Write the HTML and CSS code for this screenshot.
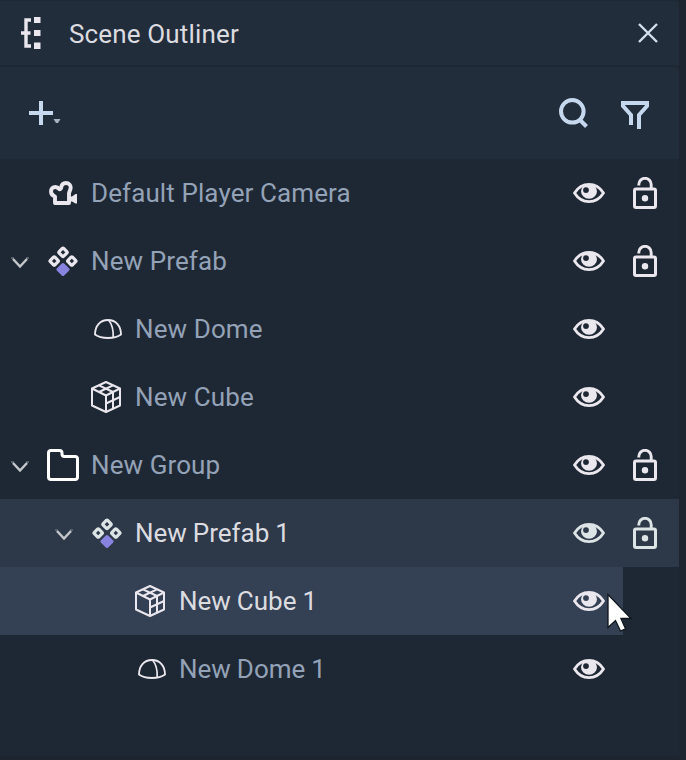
FILE: index.html
```
<!DOCTYPE html>
<html lang="en">
<head>
<meta charset="utf-8">
<title>Scene Outliner</title>
<link rel="stylesheet" href="styles.css">
</head>
<body>
<svg class="sprites" aria-hidden="true">
  <symbol id="chevron" viewBox="0 0 18 12"><path d="M0 1h3M15 1h3" stroke="#56606c" stroke-width="2"/><path d="M2 2l7 7.500 7-7.500" fill="none" stroke="#c4c7ca" stroke-width="2.500"/></symbol>
  <symbol id="eye" viewBox="0 0 32 20"><path d="M1.500 10C5 4.500 10 1.400 16 1.400S27 4.500 30.500 10C27 15.500 22 18.600 16 18.600S5 15.500 1.500 10z" fill="none" stroke="currentColor" stroke-width="2.800" stroke-linejoin="round"/><path fill-rule="evenodd" d="M16 1a8 7.200 0 0 1 8 7.200a8 7.600 0 0 1-16 0a8 7.200 0 0 1 8-7.200zM13 4.200a2.900 2.900 0 1 0 0 5.800a2.900 2.900 0 1 0 0-5.800z" fill="currentColor"/></symbol>
  <symbol id="lock" viewBox="0 0 24 32"><rect x="1.500" y="12" width="21" height="18.500" rx="1.500" fill="none" stroke="currentColor" stroke-width="3"/><path d="M5.800 8.500V7.500a6 6 0 0 1 12.400 0V12" fill="none" stroke="currentColor" stroke-width="2.900"/><circle cx="12" cy="21.300" r="3.200" fill="currentColor"/></symbol>
  <symbol id="prefab" viewBox="0 0 30 30"><g fill="none" stroke="currentColor" stroke-width="3.200"><rect x="-3.200" y="-3.200" width="6.400" height="6.400" rx="1" transform="translate(15 6.300) rotate(45)"/><rect x="-3.200" y="-3.200" width="6.400" height="6.400" rx="1" transform="translate(6.200 15) rotate(45)"/><rect x="-3.200" y="-3.200" width="6.400" height="6.400" rx="1" transform="translate(23.800 15) rotate(45)"/></g><rect x="-5.100" y="-5.100" width="10.200" height="10.200" rx="1.700" transform="translate(15 23.500) rotate(45)" fill="#8983e0"/></symbol>
  <symbol id="camera" viewBox="0 0 28 24"><path d="M6 22V15.500C3.200 14.500 2 12.500 2 10.200C2 7.700 3.800 6 6.300 6C8.300 6 9.500 7 10.500 8.300C11.500 8.300 12 7.600 12.200 6.500C12.600 3.700 14.300 2 17 2S21.700 4 21.700 6.500C21.700 9 20 10.500 20 12.500V22z" fill="none" stroke="currentColor" stroke-width="3.900" stroke-linejoin="round"/><path d="M20 15.500h3l3.500-2.500H28v9.500h-1.500l-3.500-2h-3z" fill="currentColor"/></symbol>
  <symbol id="dome" viewBox="0 0 28 20"><path d="M1 15.500C1 7 6 1 14 1s13 6 13 14.500C24 17.800 19.500 19 14 19S4 17.800 1 15.500z" fill="none" stroke="currentColor" stroke-width="1.900" stroke-linejoin="round"/><path d="M14.500 1c3.500 4 5 10 4.700 17.500" fill="none" stroke="currentColor" stroke-width="1.700"/></symbol>
  <symbol id="cube" viewBox="0 0 30 32"><g fill="none" stroke="currentColor" stroke-width="2" stroke-linejoin="round"><path d="M15 1l14 6.500v17L15 31 1 24.500v-17zM1 7.500L15 14.500l14-7M15 14.500V31"/><path d="M8 4.300l14 6.700v16.500M22 4.300L8 11M15 22.500L29 16"/></g></symbol>
  <symbol id="folder" viewBox="0 0 32 32"><path d="M4 1.500h8.500q2.500 0 2.500 2.500v1q0 2.500 2.500 2.500H28q2.500 0 2.500 2.500v18q0 2.500-2.500 2.500H4q-2.500 0-2.500-2.500V4q0-2.500 2.500-2.500z" fill="none" stroke="#fff" stroke-width="3"/></symbol>
</svg>

<main class="panel">
  <header class="titlebar">
    <svg class="tree-icon" viewBox="0 0 20 32"><path d="M10 3H5v26h5M0 16h9.500" fill="none" stroke="#ebe7ee" stroke-width="3.400"/><path d="M13 0h6.500v6h-6.500zM13 13h6.500v6h-6.500zM13 25.500h6.500v6.500h-6.500z" fill="#ebe7ee"/></svg>
    <h1 class="title">Scene Outliner</h1>
    <svg class="close-icon" viewBox="0 0 20 20"><path d="M1 1l18 18M19 1L1 19" stroke="#d3dfec" stroke-width="2.400"/></svg>
  </header>
  <div class="toolbar">
    <svg class="add-icon" viewBox="0 0 32 24"><path d="M12 0v24M0 12h24" stroke="#c5d8ee" stroke-width="4"/><path d="M24.500 18h7l-2.500 4h-2z" fill="#a5b3c2"/></svg>
    <svg class="search-icon" viewBox="0 0 30 30"><circle cx="13.300" cy="13.300" r="11.300" fill="none" stroke="#c5d8ee" stroke-width="4"/><path d="M20.500 21.500l7 7" fill="none" stroke="#c5d8ee" stroke-width="4"/></svg>
    <svg class="filter-icon" viewBox="0 0 28 28"><path d="M10 24V14L2 5V2h24v3l-8 9v14" fill="none" stroke="#c5d8ee" stroke-width="4"/></svg>
  </div>
  <div class="tree">
    <div class="row">
      <span class="twist"></span><span class="kind"><svg class="camera"><use href="#camera"/></svg></span><span class="name">Default Player Camera</span>
      <span class="see"><svg class="eye"><use href="#eye"/></svg></span><span class="guard"><svg class="lock"><use href="#lock"/></svg></span>
    </div>
    <div class="row">
      <span class="twist"><svg class="chevron"><use href="#chevron"/></svg></span><span class="kind"><svg class="prefab"><use href="#prefab"/></svg></span><span class="name">New Prefab</span>
      <span class="see"><svg class="eye"><use href="#eye"/></svg></span><span class="guard"><svg class="lock"><use href="#lock"/></svg></span>
    </div>
    <div class="row level-1">
      <span class="twist"></span><span class="kind kind-dome"><svg class="dome"><use href="#dome"/></svg></span><span class="name">New Dome</span>
      <span class="see"><svg class="eye"><use href="#eye"/></svg></span><span class="guard"></span>
    </div>
    <div class="row level-1">
      <span class="twist"></span><span class="kind kind-cube"><svg class="cube"><use href="#cube"/></svg></span><span class="name">New Cube</span>
      <span class="see"><svg class="eye"><use href="#eye"/></svg></span><span class="guard"></span>
    </div>
    <div class="row">
      <span class="twist"><svg class="chevron"><use href="#chevron"/></svg></span><span class="kind"><svg class="folder"><use href="#folder"/></svg></span><span class="name">New Group</span>
      <span class="see"><svg class="eye"><use href="#eye"/></svg></span><span class="guard"><svg class="lock"><use href="#lock"/></svg></span>
    </div>
    <div class="row level-1 parent">
      <span class="twist"><svg class="chevron"><use href="#chevron"/></svg></span><span class="kind"><svg class="prefab"><use href="#prefab"/></svg></span><span class="name numbered">New Prefab 1</span>
      <span class="see"><svg class="eye"><use href="#eye"/></svg></span><span class="guard"><svg class="lock"><use href="#lock"/></svg></span>
    </div>
    <div class="row level-2 hovered">
      <span class="twist"></span><span class="kind kind-cube"><svg class="cube"><use href="#cube"/></svg></span><span class="name numbered">New Cube 1</span>
      <span class="see"><svg class="eye"><use href="#eye"/></svg></span>
      <svg class="pointer" viewBox="0 0 26 40"><path d="M1 1.500v33l7.500-7 5 10.500 5-2.200-4.600-10.300H24z" fill="#fff" stroke="#10151c" stroke-width="1.300"/></svg>
    </div>
    <div class="row level-2">
      <span class="twist"></span><span class="kind kind-dome"><svg class="dome"><use href="#dome"/></svg></span><span class="name numbered">New Dome 1</span>
      <span class="see"><svg class="eye"><use href="#eye"/></svg></span><span class="guard"></span>
    </div>
  </div>
</main>
</body>
</html>
```
FILE: styles.css
```
* { box-sizing: border-box; }
body {
  margin: 0;
  height: 760px;
  overflow: hidden;
  background: #1e2430;
  font-family: Roboto, sans-serif;
  font-size: 26px;
}
svg { display: block; flex: none; }
.sprites { display: none; }
.panel {
  width: 679px;
  height: 756px;
  padding-top: 1px;
  background: #1e2834;
}
.titlebar, .toolbar {
  display: flex;
  align-items: center;
  background: #222d3b;
  border-radius: 0 4px 0 0;
}
.titlebar { height: 64px; padding: 0 21px; }
.tree-icon { width: 20px; height: 32px; }
.title {
  margin: 2px auto 0 28px;
  font-size: 26px;
  font-weight: 400;
  letter-spacing: .15px;
  color: #dcdce0;
}
.close-icon { width: 20px; height: 20px; }
.toolbar { height: 92px; margin-top: 2px; padding: 0 30px 0 29px; }
.add-icon { width: 32px; height: 24px; margin-right: auto; }
.search-icon { width: 30px; height: 30px; margin-right: 32px; }
.filter-icon { width: 28px; height: 28px; margin-top: 4px; }

.row {
  position: relative;
  display: flex;
  align-items: center;
  height: 68px;
  color: #ebe7ee;
}
.level-1 { padding-left: 44px; }
.level-2 { padding-left: 88px; }
.parent { background: #2d3848; color: #dde4e6; }
.hovered { width: 623px; background: #344054; }
.twist { width: 40px; display: flex; justify-content: center; padding-top: 4px; }
.kind { width: 46px; display: flex; justify-content: center; }
.kind-dome { padding-left: 2px; }
.kind-cube { padding-right: 2px; }
.name {
  margin-left: 5px;
  flex: 1;
  white-space: nowrap;
  letter-spacing: .1px;
  color: #94a2b7;
}
.numbered { letter-spacing: 0; word-spacing: -.5px; }
.parent .name, .hovered .name { color: #dcdce0; }
.see { width: 56px; display: flex; padding-left: 6px; }
.guard { width: 56px; display: flex; padding-left: 10px; }
.chevron { width: 18px; height: 12px; }
.eye { width: 32px; height: 20px; }
.lock { width: 24px; height: 32px; }
.prefab { width: 30px; height: 30px; }
.camera { width: 28px; height: 24px; }
.dome { width: 28px; height: 20px; }
.cube { width: 30px; height: 32px; }
.folder { width: 32px; height: 32px; }
.pointer {
  position: absolute;
  left: 607px;
  top: 26px;
  width: 26px;
  height: 40px;
}
```
